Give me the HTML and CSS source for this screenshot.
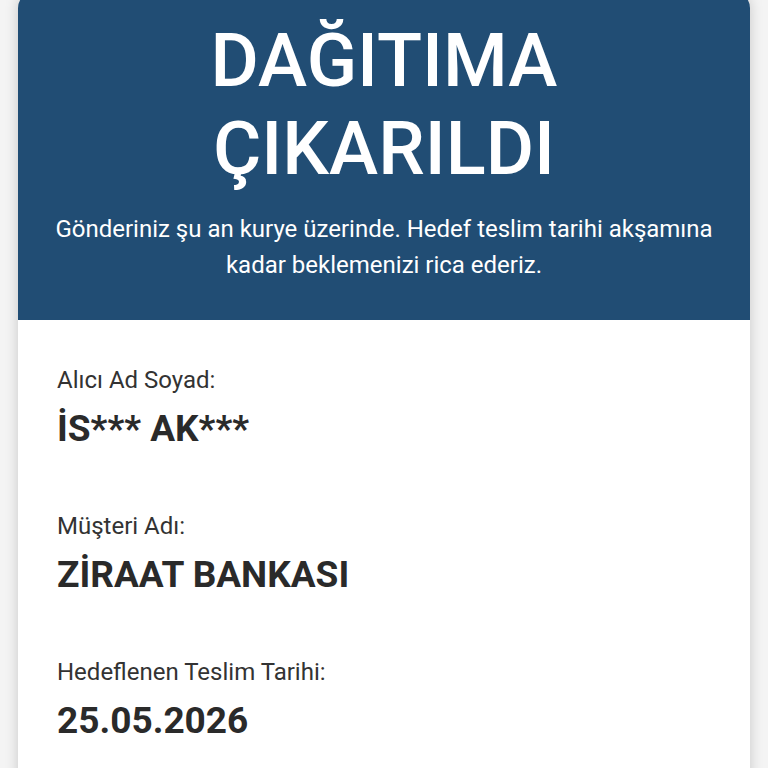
FILE: index.html
```html
<!DOCTYPE html>
<html lang="tr">
<head>
<meta charset="utf-8">
<link rel="stylesheet" href="styles.css">
</head>
<body>
<div class="card">
  <div class="header">
    <h1 class="title">DAĞITIMA<br>ÇIKARILDI</h1>
    <p class="subtitle">Gönderiniz şu an kurye üzerinde. Hedef teslim tarihi akşamına kadar beklemenizi rica ederiz.</p>
  </div>
  <div class="content">
    <div class="field">
      <div class="label">Alıcı Ad Soyad:</div>
      <div class="value">İS*** AK***</div>
    </div>
    <div class="field">
      <div class="label">Müşteri Adı:</div>
      <div class="value">ZİRAAT BANKASI</div>
    </div>
    <div class="field">
      <div class="label">Hedeflenen Teslim Tarihi:</div>
      <div class="value">25.05.2026</div>
    </div>
  </div>
</div>
</body>
</html>
```

FILE: styles.css
```css
html, body {
  margin: 0;
  padding: 0;
}
body {
  background: #f4f4f4;
  font-family: Roboto, "Noto Sans", sans-serif;
  height: 768px;
  overflow: hidden;
}
.card {
  margin: -8px 18px 0 18px;
  background: #ffffff;
  border-radius: 16px 16px 0 0;
  overflow: hidden;
  box-shadow: 0 0 14px rgba(0, 0, 0, 0.18);
  min-height: 900px;
}
.header {
  background: #214d74;
  color: #ffffff;
  text-align: center;
  padding: 25px 30px 37px;
}
.title {
  margin: 0;
  font-size: 74px;
  font-weight: 500;
  line-height: 88px;
  letter-spacing: 0;
}
.subtitle {
  margin: 18px 0 0;
  font-size: 24px;
  line-height: 36px;
}
.content {
  padding: 46px 39px 0;
  display: flex;
  flex-direction: column;
  gap: 61px;
}
.label {
  font-size: 24px;
  color: #333333;
  line-height: 28px;
}
.value {
  margin-top: 13px;
  font-size: 37px;
  font-weight: 700;
  color: #2a2a2a;
  line-height: 44px;
}
```
